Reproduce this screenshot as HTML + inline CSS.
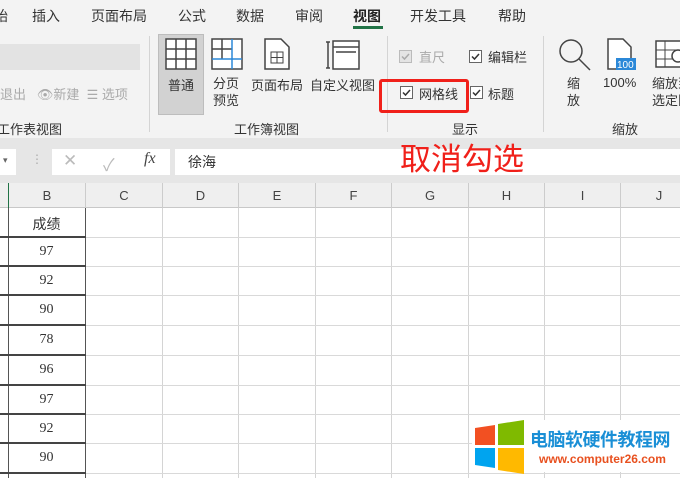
<!DOCTYPE html>
<html><head><meta charset="utf-8"><style>
*{margin:0;padding:0;box-sizing:border-box}
body{width:680px;height:478px;overflow:hidden;background:#fff;font-family:"Liberation Sans","Noto Sans CJK SC",sans-serif;position:relative;color:#333}
.a{position:absolute;white-space:nowrap}
.tab{font-size:14px;top:6px;color:#333}
.g{color:#aaa}
.cb{position:absolute;width:13px;height:13px}
.vl{position:absolute;width:1px;background:#d4d4d4}
.hl{position:absolute;height:1px;background:#d9d9d9;left:0;width:680px}
.ch{position:absolute;top:183px;height:25px;font-size:13px;text-align:center;line-height:25px;color:#444;border-right:1px solid #ccc}
.num{position:absolute;left:8px;width:77px;text-align:center;font-size:14px;font-family:"Liberation Serif","Noto Serif CJK SC",serif;color:#333}
</style></head><body>
<div class="a" style="left:0;top:0;width:680px;height:30px;background:#f3f3f3"></div>
<div class="a tab" style="left:-6px">始</div>
<div class="a tab" style="left:32px">插入</div>
<div class="a tab" style="left:91px">页面布局</div>
<div class="a tab" style="left:178px">公式</div>
<div class="a tab" style="left:236px">数据</div>
<div class="a tab" style="left:295px">审阅</div>
<div class="a tab" style="left:353px;font-weight:bold;color:#222">视图</div>
<div class="a" style="left:353px;top:26px;width:30px;height:3px;background:#217346"></div>
<div class="a tab" style="left:410px">开发工具</div>
<div class="a tab" style="left:498px">帮助</div>
<div class="a" style="left:0;top:30px;width:680px;height:108px;background:#f3f3f3"></div>
<div class="a" style="left:0;top:44px;width:140px;height:26px;background:#e3e3e3"></div>
<div class="a g" style="left:0;top:84px;font-size:13px">退出 &nbsp; 👁新建 &nbsp;☰ 选项</div>
<div class="a" style="left:-3px;top:119px;font-size:13px">工作表视图</div>
<div class="vl" style="left:149px;top:36px;height:96px"></div>
<div class="a" style="left:158px;top:34px;width:46px;height:81px;background:#d2d2d2;border:1px solid #bdbdbd"></div>
<svg class="a" style="left:165px;top:38px" width="32" height="32"><rect x="1" y="1" width="30" height="30" fill="#fff" stroke="#444" stroke-width="1.5"/><path d="M11 1V31M21 1V31M1 11H31M1 21H31" stroke="#444" stroke-width="1.5"/></svg>
<div class="a" style="left:168px;top:75px;font-size:13px">普通</div>
<svg class="a" style="left:211px;top:38px" width="32" height="32"><rect x="1" y="1" width="30" height="30" fill="#fff" stroke="#444" stroke-width="1.5"/><path d="M11 1V21M1 11H21" stroke="#444" stroke-width="1.5"/><path d="M21 1V31M1 21H31" stroke="#2b88d8" stroke-width="1.5"/></svg>
<div class="a" style="left:213px;top:75px;font-size:13px;line-height:17px">分页<br>预览</div>
<svg class="a" style="left:264px;top:38px" width="26" height="32"><path d="M1 1H17L25 9V31H1Z" fill="#fff" stroke="#444" stroke-width="1.5"/><rect x="7" y="14" width="12" height="11" fill="none" stroke="#444"/><path d="M7 19.5H19M13 14V25" stroke="#444"/></svg>
<div class="a" style="left:251px;top:75px;font-size:13px">页面布局</div>
<svg class="a" style="left:326px;top:38px" width="34" height="32"><path d="M2 4V30M0 4H4M0 30H4" stroke="#444" stroke-width="1.5"/><rect x="7" y="3" width="26" height="28" fill="#fff" stroke="#444" stroke-width="1.5"/><path d="M7 9H33M10 14H30" stroke="#444" stroke-width="1.5"/></svg>
<div class="a" style="left:310px;top:75px;font-size:13px">自定义视图</div>
<div class="a" style="left:234px;top:119px;font-size:13px">工作簿视图</div>
<div class="vl" style="left:387px;top:36px;height:96px"></div>
<svg class="cb" style="left:399px;top:50px" viewBox="0 0 13 13"><rect x=".5" y=".5" width="12" height="12" fill="#e4e4e4" stroke="#bbb"/><path d="M3 6.5L5.5 9L10 4" fill="none" stroke="#aaa" stroke-width="1.5"/></svg>
<div class="a g" style="left:419px;top:47px;font-size:13px">直尺</div>
<svg class="cb" style="left:469px;top:50px" viewBox="0 0 13 13"><rect x=".5" y=".5" width="12" height="12" fill="#fff" stroke="#666"/><path d="M3 6.5L5.5 9L10 4" fill="none" stroke="#333" stroke-width="1.5"/></svg>
<div class="a" style="left:488px;top:47px;font-size:13px">编辑栏</div>
<svg class="cb" style="left:400px;top:86px" viewBox="0 0 13 13"><rect x=".5" y=".5" width="12" height="12" fill="#fff" stroke="#666"/><path d="M3 6.5L5.5 9L10 4" fill="none" stroke="#333" stroke-width="1.5"/></svg>
<div class="a" style="left:419px;top:84px;font-size:13px">网格线</div>
<svg class="cb" style="left:470px;top:86px" viewBox="0 0 13 13"><rect x=".5" y=".5" width="12" height="12" fill="#fff" stroke="#666"/><path d="M3 6.5L5.5 9L10 4" fill="none" stroke="#333" stroke-width="1.5"/></svg>
<div class="a" style="left:488px;top:84px;font-size:13px">标题</div>
<div class="a" style="left:379px;top:79px;width:90px;height:34px;border:3px solid #f0201a;border-radius:3px"></div>
<div class="a" style="left:452px;top:119px;font-size:13px">显示</div>
<div class="vl" style="left:543px;top:36px;height:96px"></div>
<svg class="a" style="left:558px;top:38px" width="34" height="34"><circle cx="13" cy="13" r="11" fill="none" stroke="#444" stroke-width="1.5"/><path d="M21 21L32 32" stroke="#444" stroke-width="1.5"/></svg>
<div class="a" style="left:567px;top:75px;font-size:13px;line-height:17px">缩<br>放</div>
<svg class="a" style="left:607px;top:38px" width="30" height="34"><path d="M1 1H16L24 9V31H1Z" fill="#fff" stroke="#444" stroke-width="1.5"/><rect x="9" y="20" width="20" height="12" fill="#2b88d8"/><text x="10" y="30" font-size="10" fill="#fff" font-family="Liberation Sans">100</text></svg>
<div class="a" style="left:603px;top:75px;font-size:13px">100%</div>
<svg class="a" style="left:655px;top:40px" width="30" height="30"><rect x="1" y="1" width="28" height="26" fill="#fff" stroke="#444" stroke-width="1.5"/><path d="M1 10H29M1 19H29M10 1V27" stroke="#444"/><circle cx="23" cy="16" r="6" fill="#fff" stroke="#444" stroke-width="1.5"/></svg>
<div class="a" style="left:652px;top:75px;font-size:13px;line-height:17px">缩放到<br>选定区</div>
<div class="a" style="left:612px;top:119px;font-size:13px">缩放</div>
<div class="a" style="left:0;top:138px;width:680px;height:45px;background:#e6e6e6"></div>
<div class="a" style="left:0;top:149px;width:16px;height:26px;background:#fff"></div>
<div class="a" style="left:3px;top:155px;font-size:9px;color:#666">▾</div>
<div class="a" style="left:31px;top:152px;font-size:12px;color:#aaa">⋮</div>
<div class="a" style="left:52px;top:149px;width:118px;height:26px;background:#fff"></div>
<div class="a" style="left:63px;top:151px;font-size:17px;color:#bbb">✕</div>
<div class="a" style="left:103px;top:151px;font-size:17px;color:#bbb">✓</div>
<div class="a" style="left:144px;top:150px;font-size:16px;font-style:italic;font-family:'Liberation Serif',serif;color:#444">fx</div>
<div class="a" style="left:175px;top:149px;width:505px;height:26px;background:#fff"></div>
<div class="a" style="left:188px;top:152px;font-size:14px">徐海</div>
<div class="a" style="left:400px;top:140px;font-size:31px;color:#f0201a;line-height:40px">取消勾选</div>
<div class="a" style="left:0;top:183px;width:680px;height:25px;background:#efefef;border-bottom:1px solid #c8c8c8"></div>
<div class="ch" style="left:0;width:9px;border-right:1px solid #217346"></div>
<div class="ch" style="left:9px;width:77px">B</div>
<div class="ch" style="left:86px;width:77px">C</div>
<div class="ch" style="left:163px;width:76px">D</div>
<div class="ch" style="left:239px;width:77px">E</div>
<div class="ch" style="left:316px;width:76px">F</div>
<div class="ch" style="left:392px;width:77px">G</div>
<div class="ch" style="left:469px;width:76px">H</div>
<div class="ch" style="left:545px;width:76px">I</div>
<div class="ch" style="left:621px;width:77px">J</div>
<div class="vl" style="left:85px;top:208px;height:270px;background:#555"></div>
<div class="vl" style="left:8px;top:208px;height:270px;background:#555"></div>
<div class="vl" style="left:162px;top:208px;height:270px"></div>
<div class="vl" style="left:238px;top:208px;height:270px"></div>
<div class="vl" style="left:315px;top:208px;height:270px"></div>
<div class="vl" style="left:391px;top:208px;height:270px"></div>
<div class="vl" style="left:468px;top:208px;height:270px"></div>
<div class="vl" style="left:544px;top:208px;height:270px"></div>
<div class="vl" style="left:620px;top:208px;height:270px"></div>
<div class="hl" style="top:237px"></div><div class="hl" style="top:266px"></div><div class="hl" style="top:295px"></div><div class="hl" style="top:325px"></div><div class="hl" style="top:355px"></div><div class="hl" style="top:385px"></div><div class="hl" style="top:414px"></div><div class="hl" style="top:443px"></div><div class="hl" style="top:473px"></div>
<div class="a" style="left:0;top:236px;width:86px;height:2px;background:#444"></div>
<div class="a" style="left:0;top:265px;width:86px;height:2px;background:#444"></div>
<div class="a" style="left:0;top:294px;width:86px;height:2px;background:#444"></div>
<div class="a" style="left:0;top:324px;width:86px;height:2px;background:#444"></div>
<div class="a" style="left:0;top:354px;width:86px;height:2px;background:#444"></div>
<div class="a" style="left:0;top:384px;width:86px;height:2px;background:#444"></div>
<div class="a" style="left:0;top:413px;width:86px;height:2px;background:#444"></div>
<div class="a" style="left:0;top:442px;width:86px;height:2px;background:#444"></div>
<div class="a" style="left:0;top:472px;width:86px;height:2px;background:#444"></div>
<div class="num" style="top:214px;font-family:'Liberation Sans','Noto Sans CJK SC',sans-serif">成绩</div>
<div class="num" style="top:244px">97</div>
<div class="num" style="top:273px">92</div>
<div class="num" style="top:302px">90</div>
<div class="num" style="top:332px">78</div>
<div class="num" style="top:362px">96</div>
<div class="num" style="top:392px">97</div>
<div class="num" style="top:421px">92</div>
<div class="num" style="top:450px">90</div>
<div class="a" style="left:472px;top:420px;width:210px;height:52px;background:#fff"></div>
<svg class="a" style="left:475px;top:420px" width="52" height="54"><path d="M0 8L20 5V25H0Z" fill="#f25022"/><path d="M23 4L49 0V25H23Z" fill="#7fba00"/><path d="M0 28H20V48L0 45Z" fill="#00a4ef"/><path d="M23 28H49V54L23 50Z" fill="#ffb900"/></svg>
<div class="a" style="left:530px;top:426px;font-size:18px;font-weight:bold;color:#1a8fd6;letter-spacing:-0.5px">电脑软硬件教程网</div>
<div class="a" style="left:539px;top:452px;font-size:12px;font-weight:bold;color:#e8501f">www.computer26.com</div>
</body></html>
